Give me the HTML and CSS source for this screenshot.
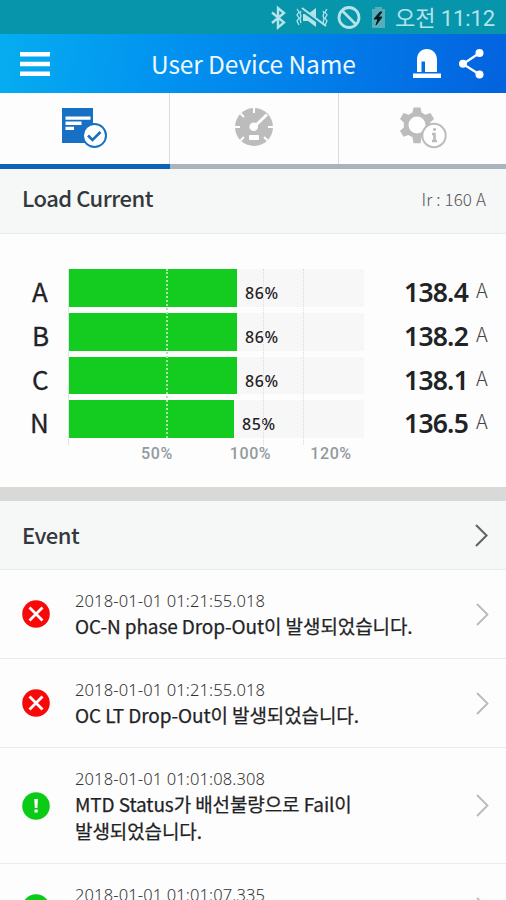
FILE: index.html
```html
<!DOCTYPE html>
<html lang="en">
<head>
<meta charset="utf-8">
<title>User Device Name</title>
<link rel="stylesheet" href="styles.css">
</head>
<body>
<div class="screen">
  <div class="statusbar">
    <svg class="status-icons" width="134" height="34" viewBox="256 0 134 34" fill="none" stroke="#b5e3ea">
      <path d="M272 12.5l12 10-6 5V8l6 5-12 10" stroke-width="2.400"/>
      <path d="M303 14h5l8-6v19l-8-6h-5z" fill="#b5e3ea" stroke="none"/>
      <path d="M301 9l25 18" stroke="#0795ac" stroke-width="4"/>
      <path d="M302 8l24 18" stroke-width="2"/>
      <path d="M297 9l2 3-2 3 2 3-2 3 2 4M301 11l-1 2 1 3-1 3 1 4M323 11l1 2-1 3 1 3-1 4M327 9l-2 3 2 3-2 3 2 3-2 4" stroke-width="1.3"/>
      <circle cx="349" cy="17.500" r="10" stroke-width="2.800"/>
      <path d="M342 10.500l14 14" stroke-width="2.600"/>
      <path d="M372 9h3V7h7v2h3v19h-13z" fill="#55afb9" stroke="none"/>
      <path d="M380 12l-6 7h4l-2 6 6-8h-4l4-5z" fill="#071a20" stroke="#071a20"/>
    </svg>
    <span class="clock">오전 11:12</span>
  </div>
  <header class="appbar">
    <svg class="menu" width="30" height="24" viewBox="0 0 30 24" fill="#fff"><path d="M0 0h30v4.500H0zM0 9.700h30v4.500H0zM0 19.400h30v4.500H0z"/></svg>
    <h1 class="title">User Device Name</h1>
    <svg class="alarm" width="28" height="29" viewBox="0 0 28 29" fill="#fff">
      <path fill-rule="evenodd" d="M4 23V11C4 4 8 0 13.800 0S24 4 24 11v12H12V12.500H8.500V23z"/><path d="M0 24.500h28V29H0z"/>
    </svg>
    <svg class="share" width="25" height="30" viewBox="0 0 25 30" fill="#fff"><path d="M20.500 4L4 15l16.500 10.500" fill="none" stroke="#fff" stroke-width="2.200"/><circle cx="20.500" cy="4" r="4"/><circle cx="4" cy="14.800" r="4"/><circle cx="20.500" cy="25.500" r="4"/></svg>
  </header>
  <nav class="tabs">
    <div class="tab active">
      <svg width="46" height="42" viewBox="0 0 46 42">
        <path d="M1 1h31v35H1z" fill="#1770c4"/>
        <path d="M4.500 9.500h25v3.300h-25zM4.500 14.600h16v3.300h-16zM4.500 19.700h8.500V23H4.500z" fill="#fff"/>
        <circle cx="33.500" cy="28.500" r="11.500" fill="#fff" stroke="#1770c4" stroke-width="2"/>
        <path d="M27 28.500l4.500 4.500 8-8" fill="none" stroke="#1770c4" stroke-width="2.600"/>
      </svg>
    </div>
    <div class="tab">
      <svg width="38" height="38" viewBox="0 0 38 38">
        <circle cx="19" cy="19" r="19" fill="#bcbcbc"/>
        <path d="M19 0v5M0 19h5M33 19h5M5.500 5.500l3.500 3.500M5.500 32.500l3.500-3.500M32.500 32.500L29 29" stroke="#fff" stroke-width="2"/>
        <path d="M19 19L32 6.500" stroke="#fff" stroke-width="3"/>
        <circle cx="18.700" cy="18.700" r="4.300" fill="#fff"/>
        <rect x="14" y="27" width="10" height="5" rx="1" fill="#fff"/>
      </svg>
    </div>
    <div class="tab">
      <svg width="48" height="42" viewBox="0 0 48 42">
        <path d="M14.500 0.500h7l1 5 4 2.300 5-1.800 3.500 6-3.800 3.400v5l3.800 3.400-3.500 6-5-1.800-4 2.200-1 6h-7l-1-6-4-2.200-5 1.800-3.500-6 3.800-3.400v-5L1 12l3.500-6 5 1.800 4-2.300z" fill="#bcbcbc"/>
        <circle cx="18" cy="18" r="8.500" fill="#fff"/>
        <circle cx="35" cy="28.500" r="11.700" fill="#fff" stroke="#bcbcbc" stroke-width="2"/>
        <path d="M33 27h2.500v7.500M33 34h5M34 22.500h3" stroke="#bcbcbc" stroke-width="2.700" fill="none"/>
      </svg>
    </div>
  </nav>

  <section class="load">
    <div class="section-head load-head"><h2>Load Current</h2><span class="rating">Ir : 160 A</span></div>
    <div class="chart">
      <div class="plot">
        <div class="row"><span class="phase">A</span><div class="track"><div class="fill" style="width:168px"></div><span class="pct">86%</span></div><span class="value">138.4</span><span class="unit">A</span></div>
        <div class="row"><span class="phase">B</span><div class="track"><div class="fill" style="width:168px"></div><span class="pct">86%</span></div><span class="value">138.2</span><span class="unit">A</span></div>
        <div class="row"><span class="phase">C</span><div class="track"><div class="fill" style="width:168px"></div><span class="pct">86%</span></div><span class="value">138.1</span><span class="unit">A</span></div>
        <div class="row"><span class="phase n">N</span><div class="track"><div class="fill" style="width:165px"></div><span class="pct">85%</span></div><span class="value">136.5</span><span class="unit">A</span></div>
        <i class="line zero"></i><i class="line half"></i><i class="line full"></i><i class="line over"></i>
      </div>
      <div class="axis"><span>50%</span><span>100%</span><span>120%</span></div>
    </div>
  </section>

  <section class="events">
    <div class="section-head event-head"><h2>Event</h2><svg class="chevron" width="13" height="23" viewBox="0 0 13 23"><path d="M1 1l10.500 10.500L1 22"/></svg></div>
    <ul>
      <li class="event">
        <svg class="badge" width="28" height="28" viewBox="0 0 28 28"><circle cx="14" cy="14" r="13.800" fill="#f80808"/><path d="M7.500 7.500l13 13M20.500 7.500l-13 13" stroke="#fff" stroke-width="2.800"/></svg>
        <div class="body"><time>2018-01-01 01:21:55.018</time><p>OC-N phase Drop-Out이 발생되었습니다.</p></div>
        <svg class="chevron" width="13" height="23" viewBox="0 0 13 23"><path d="M1 1l10.500 10.500L1 22"/></svg>
      </li>
      <li class="event">
        <svg class="badge" width="28" height="28" viewBox="0 0 28 28"><circle cx="14" cy="14" r="13.800" fill="#f80808"/><path d="M7.500 7.500l13 13M20.500 7.500l-13 13" stroke="#fff" stroke-width="2.800"/></svg>
        <div class="body"><time>2018-01-01 01:21:55.018</time><p>OC LT Drop-Out이 발생되었습니다.</p></div>
        <svg class="chevron" width="13" height="23" viewBox="0 0 13 23"><path d="M1 1l10.500 10.500L1 22"/></svg>
      </li>
      <li class="event tall">
        <svg class="badge" width="28" height="28" viewBox="0 0 28 28"><circle cx="14" cy="14" r="13.800" fill="#0bcb16"/><path d="M12.300 7h3.600l-.5 9h-2.600zM12.500 17.500h3.200v3h-3.200z" fill="#fff"/></svg>
        <div class="body"><time>2018-01-01 01:01:08.308</time><p>MTD Status가 배선불량으로 Fail이<br>발생되었습니다.</p></div>
        <svg class="chevron" width="13" height="23" viewBox="0 0 13 23"><path d="M1 1l10.500 10.500L1 22"/></svg>
      </li>
      <li class="event">
        <svg class="badge" width="28" height="28" viewBox="0 0 28 28"><circle cx="14" cy="14" r="13.800" fill="#0bcb16"/></svg>
        <div class="body"><time>2018-01-01 01:01:07.335</time></div>
        <svg class="chevron" width="13" height="23" viewBox="0 0 13 23"><path d="M1 1l10.500 10.500L1 22"/></svg>
      </li>
    </ul>
  </section>
</div>
</body>
</html>
```
FILE: styles.css
```css
* { box-sizing: border-box; margin: 0; padding: 0; }
body { background: #fdfdfd; font-family: "Noto Sans CJK KR", sans-serif; font-feature-settings: "calt" 0; color: #1f2326; }
.screen { width: 506px; height: 900px; overflow: hidden; }
svg { display: block; flex: none; }
ul { list-style: none; }

.statusbar { display: flex; height: 34px; padding-left: 256px; background: #0795ac; }
.clock { padding-left: 5px; font-family: Roboto, "Noto Sans CJK KR", sans-serif; font-size: 22px; line-height: 37px; letter-spacing: -0.1px; color: #b5e3ea; white-space: nowrap; font-weight: 400; }

.appbar { display: flex; align-items: center; height: 59px; padding: 0 22px 0 20px; background: linear-gradient(100deg, #06adf0 0%, #0295f0 30%, #0280ea 60%, #0362df 100%); }
.title { flex: 1; padding-left: 101px; font-size: 24.5px; line-height: 59px; font-weight: 400; letter-spacing: -0.1px; color: #eef9ff; white-space: nowrap; }
.alarm { margin-right: 18px; }

.tabs { display: grid; grid-template-columns: 170px 169px 167px; height: 76px; }
.tab { display: flex; justify-content: center; padding: 15px 2px 0 0; box-shadow: inset -1px 0 #dcdcdc; border-bottom: 5px solid #a9b4bd; }
.tab:last-child { box-shadow: none; padding: 14px 0 0; }
.tab.active { border-bottom-color: #0c62b8; padding-top: 14px; }

.section-head { display: flex; align-items: center; justify-content: space-between; background: #f6f7f7; border-bottom: 1px solid #e9eaea; padding: 0 20px 0 22px; }
.section-head h2 { padding-bottom: 4px; font-size: 22px; font-weight: 500; letter-spacing: -0.5px; line-height: 32px; color: #33383c; }
.load-head { height: 65px; padding-bottom: 5px; }
.rating { font-size: 17px; font-weight: 300; letter-spacing: 0.1px; color: #555; }

.chart { height: 253px; padding-top: 35px; }
.plot { position: relative; display: grid; gap: 6px; height: 169px; grid-template-rows: repeat(4, 37.75px); }
.row { display: grid; grid-template-columns: 69px 295px 104px 20px; grid-template-rows: 37.75px; }
.row > * { min-height: 0; white-space: nowrap; }
.phase { padding-left: 32px; font-size: 26px; font-weight: 400; line-height: 43px; -webkit-text-stroke: 0.3px; }
.phase.n { padding-left: 30px; }
.track { display: flex; background: #f7f7f7; }
.fill { background: #14cb20; }
.pct { padding-left: 8px; font-family: "Noto Sans", sans-serif; font-weight: 500; font-size: 16px; letter-spacing: 0.6px; line-height: 48px; }
.value { text-align: right; font-family: "Noto Sans", sans-serif; font-weight: 600; font-size: 26.5px; letter-spacing: -0.8px; line-height: 46px; }
.unit { padding-left: 8px; font-size: 20px; font-weight: 300; color: #444; line-height: 41px; }
.line { position: absolute; top: 0; width: 0; height: 176px; border-left: 1px dotted #d9dcdc; }
.zero { left: 68px; border-left: 1px solid #dce3e3; }
.half { left: 166px; height: 169px; border-left: 2px dotted #a7e9a9; }
.full { left: 263px; }
.over { left: 303px; }
.axis { display: flex; padding-left: 141px; padding-top: 6px; font-family: Roboto, sans-serif; font-size: 16px; line-height: 20px; font-weight: 500; letter-spacing: 0.6px; color: #929a9f; }
.axis span:nth-child(2) { margin-left: 57px; }
.axis span:nth-child(3) { margin-left: 39px; }

.events { border-top: 14px solid #d9dad8; }
.event-head { height: 69px; padding-right: 18px; }
.event-head h2 { padding-bottom: 3px; }
.chevron { fill: none; stroke: #b9b9b9; stroke-width: 1.8; }
.event-head .chevron { stroke: #60666a; stroke-width: 2.1; }
.event { display: flex; align-items: center; height: 89px; padding: 0 17px 0 22px; border-bottom: 1px solid #ebebeb; }
.event.tall { height: 116px; }
.body { flex: 1; align-self: stretch; padding: 20px 0 0 25px; }
time { display: block; font-family: "Noto Sans", sans-serif; font-weight: 300; font-size: 16.5px; letter-spacing: 0.13px; line-height: 22px; color: #333; white-space: nowrap; }
.body p { font-size: 19px; line-height: 27px; font-weight: 400; letter-spacing: -0.1px; -webkit-text-stroke: 0.25px; color: #1f2326; white-space: nowrap; }
```
